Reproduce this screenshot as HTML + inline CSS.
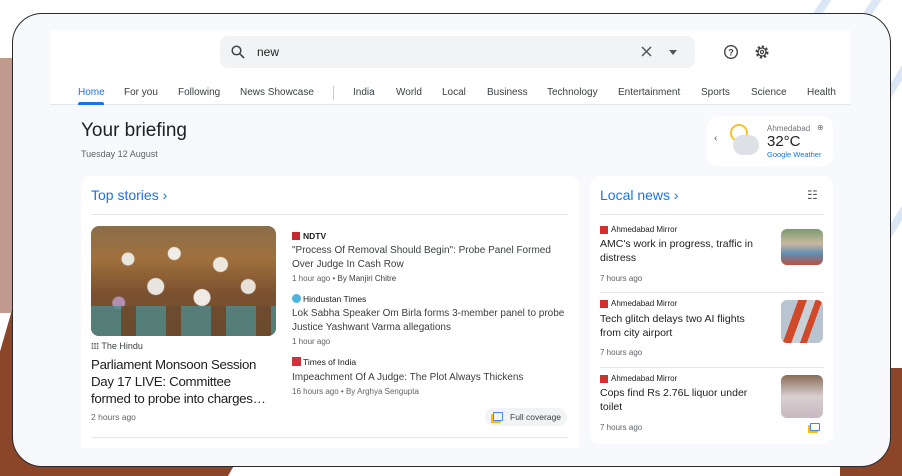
<!DOCTYPE html>
<html><head><meta charset="utf-8"><style>
*{margin:0;padding:0;box-sizing:border-box}
body{width:902px;height:476px;overflow:hidden;background:#fff;position:relative;font-family:"Liberation Sans",sans-serif;color:#202124}
.a{position:absolute}
.t{position:absolute;white-space:nowrap}
</style></head><body>
<div class="a" style="left:0;top:58px;width:20px;height:255px;background:#c09a8c"></div>
<div class="a" style="left:0;top:310px;width:40px;height:166px;background:#8b4528;clip-path:polygon(30% 0,100% 0,100% 100%,0 100%,0 25%)"></div>
<div class="a" style="left:0;top:455px;width:240px;height:21px;background:#8b4528;clip-path:polygon(0 0,100% 0,95% 100%,0 100%)"></div>
<div class="a" style="left:840px;top:368px;width:62px;height:108px;background:#8b4528;border-top-left-radius:30px"></div>
<svg class="a" style="left:760px;top:0" width="142" height="476"><g stroke="#dbe7f4" stroke-width="8"><line x1="70" y1="-5" x2="40" y2="40"/><line x1="120" y1="-5" x2="80" y2="55"/><line x1="150" y1="60" x2="125" y2="100"/><line x1="150" y1="200" x2="125" y2="240"/></g></svg>
<div class="a" style="left:12px;top:13px;width:879px;height:454px;background:#f7f9fc;border:1.5px solid #2a2a2a;border-radius:30px"></div>
<div class="a" style="left:50px;top:30px;width:800px;height:75px;background:#fff;border-bottom:1px solid #e3e6ea"></div>
<div class="a" style="left:220px;top:36px;width:475px;height:32px;background:#f1f3f4;border-radius:8px"></div>
<svg class="a" style="left:231px;top:45px" width="14" height="14"><circle cx="5.5" cy="5.5" r="4.3" fill="none" stroke="#444" stroke-width="1.5"/><line x1="8.6" y1="8.6" x2="13" y2="13" stroke="#444" stroke-width="1.6"/></svg>
<div class="t" style="left:257px;top:45px;font-size:12px;color:#222">new</div>
<svg class="a" style="left:641px;top:46px" width="11" height="11"><path d="M1 1L10 10M10 1L1 10" stroke="#555" stroke-width="1.5"/></svg>
<svg class="a" style="left:669px;top:50px" width="8" height="5"><path d="M0 0H8L4 5Z" fill="#555"/></svg>
<svg class="a" style="left:723px;top:44px" width="16" height="16"><circle cx="8" cy="8" r="6.3" fill="none" stroke="#444" stroke-width="1.4"/><text x="8" y="11.5" font-size="9" text-anchor="middle" fill="#444" font-family="Liberation Sans" font-weight="bold">?</text></svg>
<svg class="a" style="left:754px;top:44px" width="16" height="16"><circle cx="8" cy="8" r="5.3" fill="none" stroke="#444" stroke-width="2.4" stroke-dasharray="2.2 1.9"/><circle cx="8" cy="8" r="4" fill="none" stroke="#444" stroke-width="1.3"/><circle cx="8" cy="8" r="1.6" fill="none" stroke="#444" stroke-width="1.2"/></svg>
<div class="t" style="top:87px;font-size:10px;color:#3c4043;left:0;width:902px">
<span class="t" style="left:78px;color:#1a73e8">Home</span>
<span class="t" style="left:124px">For you</span>
<span class="t" style="left:178px">Following</span>
<span class="t" style="left:240px">News Showcase</span>
<span class="t" style="left:353px">India</span>
<span class="t" style="left:396px">World</span>
<span class="t" style="left:442px">Local</span>
<span class="t" style="left:487px">Business</span>
<span class="t" style="left:547px">Technology</span>
<span class="t" style="left:618px">Entertainment</span>
<span class="t" style="left:701px">Sports</span>
<span class="t" style="left:751px">Science</span>
<span class="t" style="left:807px">Health</span>
</div>
<div class="a" style="left:78px;top:102px;width:26px;height:3px;background:#1a73e8;border-radius:2px 2px 0 0"></div>
<div class="a" style="left:333px;top:86px;width:1px;height:14px;background:#ccc"></div>
<div class="t" style="left:81px;top:120px;font-size:19px;color:#202124">Your briefing</div>
<div class="t" style="left:81px;top:149px;font-size:9px;color:#5f6368">Tuesday 12 August</div>
<div class="a" style="left:707px;top:116px;width:126px;height:50px;background:#fff;border-radius:12px"></div>
<div class="t" style="left:714px;top:133px;font-size:10px;color:#555">‹</div>
<div class="a" style="left:730px;top:124px;width:18px;height:18px;border-radius:50%;border:2px solid #f4c430"></div>
<div class="a" style="left:733px;top:135px;width:26px;height:20px;border-radius:10px;background:#dde1e6"></div>
<div class="t" style="left:767px;top:124px;font-size:8px;color:#70757a">Ahmedabad</div>
<div class="t" style="left:817px;top:123px;font-size:8px;color:#70757a">⊕</div>
<div class="t" style="left:767px;top:133px;font-size:15px;color:#202124">32°C</div>
<div class="t" style="left:767px;top:150px;font-size:7.5px;color:#1a73e8">Google Weather</div>
<div class="a" style="left:81px;top:176px;width:498px;height:272px;background:#fff;border-radius:10px 10px 0 0"></div>
<div class="t" style="left:91px;top:187px;font-size:14px;color:#1a73e8">Top stories ›</div>
<div class="a" style="left:91px;top:214px;width:477px;height:1px;background:#e6e8eb"></div>
<div class="a" style="left:91px;top:226px;width:185px;height:110px;border-radius:8px;overflow:hidden;background:linear-gradient(180deg,#8a6e4a 0%,#a0703c 30%,#7c5230 60%,#6b4a30 100%)">
 <div class="a" style="left:0;top:0;width:185px;height:110px;background:radial-gradient(circle at 20% 30%,#e9e6e0 0 6px,transparent 7px),radial-gradient(circle at 45% 25%,#f0ece6 0 6px,transparent 7px),radial-gradient(circle at 70% 35%,#ece8e0 0 7px,transparent 8px),radial-gradient(circle at 35% 55%,#e8e4de 0 8px,transparent 9px),radial-gradient(circle at 85% 55%,#e6e0d8 0 7px,transparent 8px),radial-gradient(circle at 60% 65%,#efeae4 0 8px,transparent 9px),radial-gradient(circle at 15% 70%,#b08fb0 0 6px,transparent 7px)"></div>
 <div class="a" style="left:0;top:80px;width:185px;height:30px;background:repeating-linear-gradient(90deg,#4f8a8a 0 30px,#6b4a2e 30px 45px);opacity:.8"></div>
</div>
<div class="t" style="left:91px;top:341px;font-size:9px;color:#3c4043">𝍖 The Hindu</div>
<div class="t" style="left:91px;top:356px;font-size:13.3px;line-height:17px;color:#202124;letter-spacing:-0.3px">Parliament Monsoon Session<br>Day 17 LIVE: Committee<br>formed to probe into charges…</div>
<div class="t" style="left:91px;top:412px;font-size:8.5px;color:#5f6368">2 hours ago</div>
<div class="a" style="left:292px;top:232px;width:8px;height:8px;background:#c8262e"></div>
<div class="t" style="left:303px;top:231px;font-size:8.5px;font-weight:bold;color:#202124">NDTV</div>
<div class="a" style="left:292px;top:244px;width:275px;font-size:10px;line-height:13.5px;color:#3c4043">"Process Of Removal Should Begin": Probe Panel Formed Over Judge In Cash Row</div>
<div class="t" style="left:292px;top:274px;font-size:8px;color:#5f6368">1 hour ago • <b style="color:#3c4043;font-weight:normal">By Manjiri Chitre</b></div>
<div class="a" style="left:292px;top:294px;width:9px;height:9px;border-radius:50%;background:#4fb3e0"></div>
<div class="t" style="left:303px;top:294px;font-size:8.5px;color:#202124">Hindustan Times</div>
<div class="a" style="left:292px;top:307px;width:275px;font-size:10px;line-height:13.5px;color:#3c4043">Lok Sabha Speaker Om Birla forms 3-member panel to probe Justice Yashwant Varma allegations</div>
<div class="t" style="left:292px;top:337px;font-size:8px;color:#5f6368">1 hour ago</div>
<div class="a" style="left:292px;top:357px;width:9px;height:9px;background:#d2303a"></div>
<div class="t" style="left:303px;top:357px;font-size:8.5px;color:#202124">Times of India</div>
<div class="t" style="left:292px;top:372px;font-size:10px;color:#3c4043">Impeachment Of A Judge: The Plot Always Thickens</div>
<div class="t" style="left:292px;top:387px;font-size:8px;color:#5f6368">16 hours ago • By Arghya Sengupta</div>
<div class="a" style="left:485px;top:408px;width:82px;height:18px;border-radius:9px;background:#f1f3f4"></div>
<div class="a" style="left:493px;top:412px;width:10px;height:9px;border:1.5px solid #4285f4;border-radius:1px;box-shadow:-2px 2px 0 #fbbc04"></div>
<div class="t" style="left:510px;top:412px;font-size:8.5px;color:#3c4043">Full coverage</div>
<div class="a" style="left:91px;top:437px;width:477px;height:1px;background:#e6e8eb"></div>
<div class="a" style="left:590px;top:176px;width:243px;height:268px;background:#fff;border-radius:10px"></div>
<div class="t" style="left:600px;top:187px;font-size:14px;color:#1a73e8">Local news ›</div>
<div class="t" style="left:807px;top:188px;font-size:12px;color:#555">☷</div>
<div class="a" style="left:600px;top:214px;width:224px;height:1px;background:#e6e8eb"></div>
<div class="a" style="left:600px;top:226px;width:8px;height:8px;background:#d32f2f"></div>
<div class="t" style="left:611px;top:225px;font-size:8px;color:#202124">Ahmedabad Mirror</div>
<div class="a" style="left:600px;top:238px;width:165px;font-size:10.5px;line-height:13.5px;color:#202124">AMC's work in progress, traffic in distress</div>
<div class="t" style="left:600px;top:274px;font-size:8px;color:#5f6368">7 hours ago</div>
<div class="a" style="left:781px;top:229px;width:42px;height:36px;border-radius:6px;background:linear-gradient(#7a9a70,#c8b8a0 40%,#5e8cb0 70%,#c05040)"></div>
<div class="a" style="left:600px;top:292px;width:224px;height:1px;background:#e6e8eb"></div>
<div class="a" style="left:600px;top:300px;width:8px;height:8px;background:#d32f2f"></div>
<div class="t" style="left:611px;top:299px;font-size:8px;color:#202124">Ahmedabad Mirror</div>
<div class="a" style="left:600px;top:313px;width:155px;font-size:10.5px;line-height:13.5px;color:#202124">Tech glitch delays two AI flights from city airport</div>
<div class="t" style="left:600px;top:348px;font-size:8px;color:#5f6368">7 hours ago</div>
<div class="a" style="left:781px;top:300px;width:42px;height:43px;border-radius:6px;background:linear-gradient(110deg,#b8c4d0 0 30%,#d04a2a 30% 45%,#c8d0d8 45% 60%,#d04a2a 60% 72%,#b8c4d0 72%)"></div>
<div class="a" style="left:600px;top:367px;width:224px;height:1px;background:#e6e8eb"></div>
<div class="a" style="left:600px;top:375px;width:8px;height:8px;background:#d32f2f"></div>
<div class="t" style="left:611px;top:374px;font-size:8px;color:#202124">Ahmedabad Mirror</div>
<div class="a" style="left:600px;top:387px;width:160px;font-size:10.5px;line-height:13.5px;color:#202124">Cops find Rs 2.76L liquor under toilet</div>
<div class="t" style="left:600px;top:423px;font-size:8px;color:#5f6368">7 hours ago</div>
<div class="a" style="left:781px;top:375px;width:42px;height:43px;border-radius:6px;background:linear-gradient(#8a6a58,#d8d0d0 50%,#c8b8c0)"></div>
<div class="a" style="left:810px;top:423px;width:10px;height:8px;border:1.5px solid #4285f4;border-radius:1px;box-shadow:-2px 2px 0 #fbbc04"></div>
</body></html>
